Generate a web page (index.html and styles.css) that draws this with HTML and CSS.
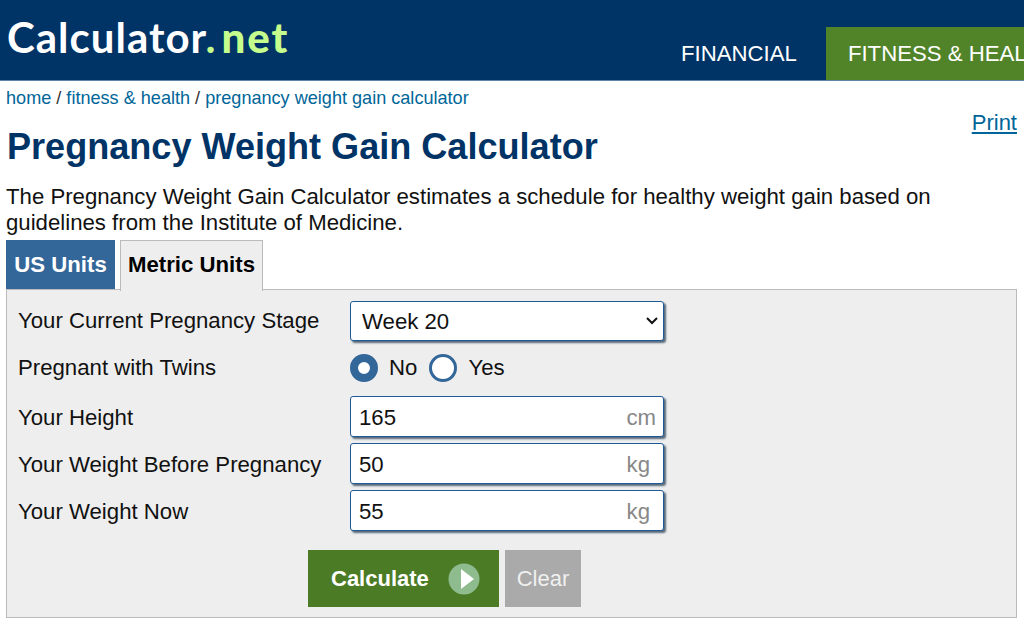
FILE: index.html
```html
<!DOCTYPE html>
<html>
    <head>
        <meta charset="UTF-8">
        <meta name="viewport" content="width=device-width, initial-scale=1.0">
        <title>Pregnancy Weight Gain Calculator</title>
        <link rel="stylesheet" href="styles.css">
    </head>
    <body>
        <div class="header">
            <a class="logo" href="#">Calculator<span class="logo-dot">.</span><span class="logo-net">net</span></a>
            <div class="nav">
                <a class="nav-item" href="#">FINANCIAL</a>
                <a class="nav-item active" href="#">FITNESS &amp; HEALTH</a>
            </div>
        </div>
        <div class="content">
            <div class="top-row">
                <div class="crumbs"><a href="#">home</a> / <a href="#">fitness &amp; health</a> / <a href="#">pregnancy weight gain calculator</a></div>
                <a class="print" href="#">Print</a>
            </div>
            <h1>Pregnancy Weight Gain Calculator</h1>
            <p class="intro">The Pregnancy Weight Gain Calculator estimates a schedule for healthy weight gain based on guidelines from the Institute of Medicine.</p>
            <div class="tabs">
                <a class="tab" href="#">US Units</a>
                <a class="tab current" href="#">Metric Units</a>
            </div>
            <form class="panel">
                <div class="row row-stage">
                    <label for="stage">Your Current Pregnancy Stage</label>
                    <div class="input-container">
                        <select id="stage" class="field">
                            <option>Week 20</option>
                        </select>
                        <svg class="chevron" width="12" height="8" viewBox="0 0 12 8">
                            <polyline points="1,1 6,6 11,1" fill="none" stroke="#111111" stroke-width="2"/>
                        </svg>
                    </div>
                </div>
                <div class="row row-twins">
                    <span class="label">Pregnant with Twins</span>
                    <div class="radios">
                        <input type="radio" name="twins" id="twinsNo" checked>
                        <label for="twinsNo">No</label>
                        <input type="radio" name="twins" id="twinsYes">
                        <label for="twinsYes">Yes</label>
                    </div>
                </div>
                <div class="row">
                    <label for="height">Your Height</label>
                    <div class="input-container">
                        <input class="field" type="text" id="height" value="165">
                        <span class="unit">cm</span>
                    </div>
                </div>
                <div class="row">
                    <label for="before">Your Weight Before Pregnancy</label>
                    <div class="input-container">
                        <input class="field" type="text" id="before" value="50">
                        <span class="unit unit-kg">kg</span>
                    </div>
                </div>
                <div class="row">
                    <label for="now">Your Weight Now</label>
                    <div class="input-container">
                        <input class="field" type="text" id="now" value="55">
                        <span class="unit unit-kg">kg</span>
                    </div>
                </div>
                <div class="buttons">
                    <button type="button" class="btn-calc">
                        Calculate
                        <svg width="32" height="32" viewBox="0 0 32 32">
                            <circle cx="16" cy="16" r="15.5" fill="#8fbc8f"/>
                            <polygon points="13,6 26,16 13,26" fill="#ffffff"/>
                        </svg>
                    </button>
                    <button type="button" class="btn-clear">Clear</button>
                </div>
            </form>
        </div>
    </body>
</html>
```

FILE: styles.css
```css
* {
    margin: 0;
    padding: 0;
    box-sizing: border-box;
    font-family: "Liberation Sans", Arial, sans-serif;
}
html, body {
    height: 630px;
    overflow: hidden;
}
body {
    background-color: white;
    color: black;
    font-size: 22.2px;
}
a {
    color: #006699;
}
.header {
    display: flex;
    align-items: flex-end;
    height: 81px;
    background-color: #003366;
    border-bottom: 1px solid #5f84a8;
    overflow: hidden;
}
.logo {
    flex-shrink: 0;
    align-self: flex-start;
    width: 652px;
    margin: 10px 0 0 7px;
    font-family: "Lato", sans-serif;
    font-size: 42px;
    font-weight: 700;
    line-height: 54px;
    letter-spacing: 1px;
    color: white;
    text-decoration: none;
    white-space: nowrap;
}
.logo-dot {
    font-family: inherit;
    color: #c6fe8e;
    margin-right: 5px;
}
.logo-net {
    font-family: inherit;
    font-weight: 900;
    letter-spacing: 2px;
    color: #c6fe8e;
}
.nav {
    display: flex;
    flex-shrink: 0;
    gap: 7px;
}
.nav-item {
    height: 53px;
    line-height: 53px;
    padding: 0 22px;
    font-size: 22.2px;
    color: white;
    text-decoration: none;
    white-space: nowrap;
}
.nav-item.active {
    background-color: #518428;
}
.content {
    padding: 0 7px 0 6px;
}
.top-row {
    display: flex;
    justify-content: space-between;
    align-items: flex-start;
    height: 28px;
    padding-top: 7px;
    font-size: 18.1px;
    line-height: 21px;
    color: #333333;
}
.crumbs a {
    text-decoration: none;
}
.print {
    font-size: 22px;
    margin-top: 22px;
    line-height: 25px;
}
h1 {
    margin-top: 18px;
    padding-left: 1px;
    font-size: 36.1px;
    line-height: 40px;
    color: #003366;
}
.intro {
    margin-top: 17px;
    line-height: 26px;
    color: #111111;
}
.tabs {
    display: flex;
    gap: 5px;
    margin-top: 4px;
    height: 50px;
}
.tab {
    width: 109px;
    height: 49px;
    line-height: 49px;
    text-align: center;
    font-weight: bold;
    color: white;
    background-color: #336699;
    text-decoration: none;
}
.tab.current {
    width: 143px;
    height: 51px;
    line-height: 47px;
    background-color: #eeeeee;
    color: black;
    border: 1px solid #bbbbbb;
    border-bottom: none;
    position: relative;
    z-index: 1;
}
.panel {
    height: 329px;
    padding: 11px 0 0 11px;
    background-color: #eeeeee;
    border: 1px solid #bbbbbb;
    margin-top: -1px;
}
.row {
    display: grid;
    grid-template-columns: 332px 314px;
    align-items: center;
    height: 41px;
    margin-bottom: 6px;
}
.row-stage {
    height: 40px;
    margin-bottom: 0;
}
.row-twins {
    height: 54px;
    margin-bottom: 1px;
}
.row label, .row .label {
    color: #111111;
}
.row > label {
    margin-top: 2px;
}
.row-stage > label, .row-twins > .label {
    margin-top: 0;
}
.field {
    display: block;
    width: 314px;
    height: 41px;
    padding: 2px 8px 0;
    font-size: 22.2px;
    color: #111111;
    background-color: white;
    border: 1px solid #1f5a96;
    border-radius: 3px;
    box-shadow: 2px 2px 2px #56687a;
}
select.field {
    appearance: none;
    height: 40px;
    padding: 0 8px 0 11px;
}
.chevron {
    position: absolute;
    right: 6px;
    top: 16px;
    pointer-events: none;
}
.input-container {
    position: relative;
}
.unit {
    position: absolute;
    right: 8px;
    top: 9px;
    color: #888888;
}
.unit-kg {
    right: 14px;
}
.radios {
    display: flex;
    align-items: center;
}
.radios input {
    appearance: none;
    width: 28px;
    height: 28px;
    border: 3px solid #336699;
    border-radius: 50%;
    background-color: white;
    margin-right: 11px;
}
.radios input:checked {
    border-width: 8.5px;
}
.radios label {
    margin-right: 12px;
}
.buttons {
    display: flex;
    gap: 6px;
    margin: 19px 0 0 290px;
}
button {
    height: 57px;
    border: none;
    color: white;
    font-size: 22px;
    cursor: pointer;
}
.btn-calc {
    display: flex;
    align-items: center;
    justify-content: space-between;
    width: 191px;
    padding: 0 19px 0 23px;
    font-weight: bold;
    background-color: #4c7b25;
}
.btn-clear {
    width: 76px;
    color: #f0f0f0;
    background-color: #aaaaaa;
}
```
